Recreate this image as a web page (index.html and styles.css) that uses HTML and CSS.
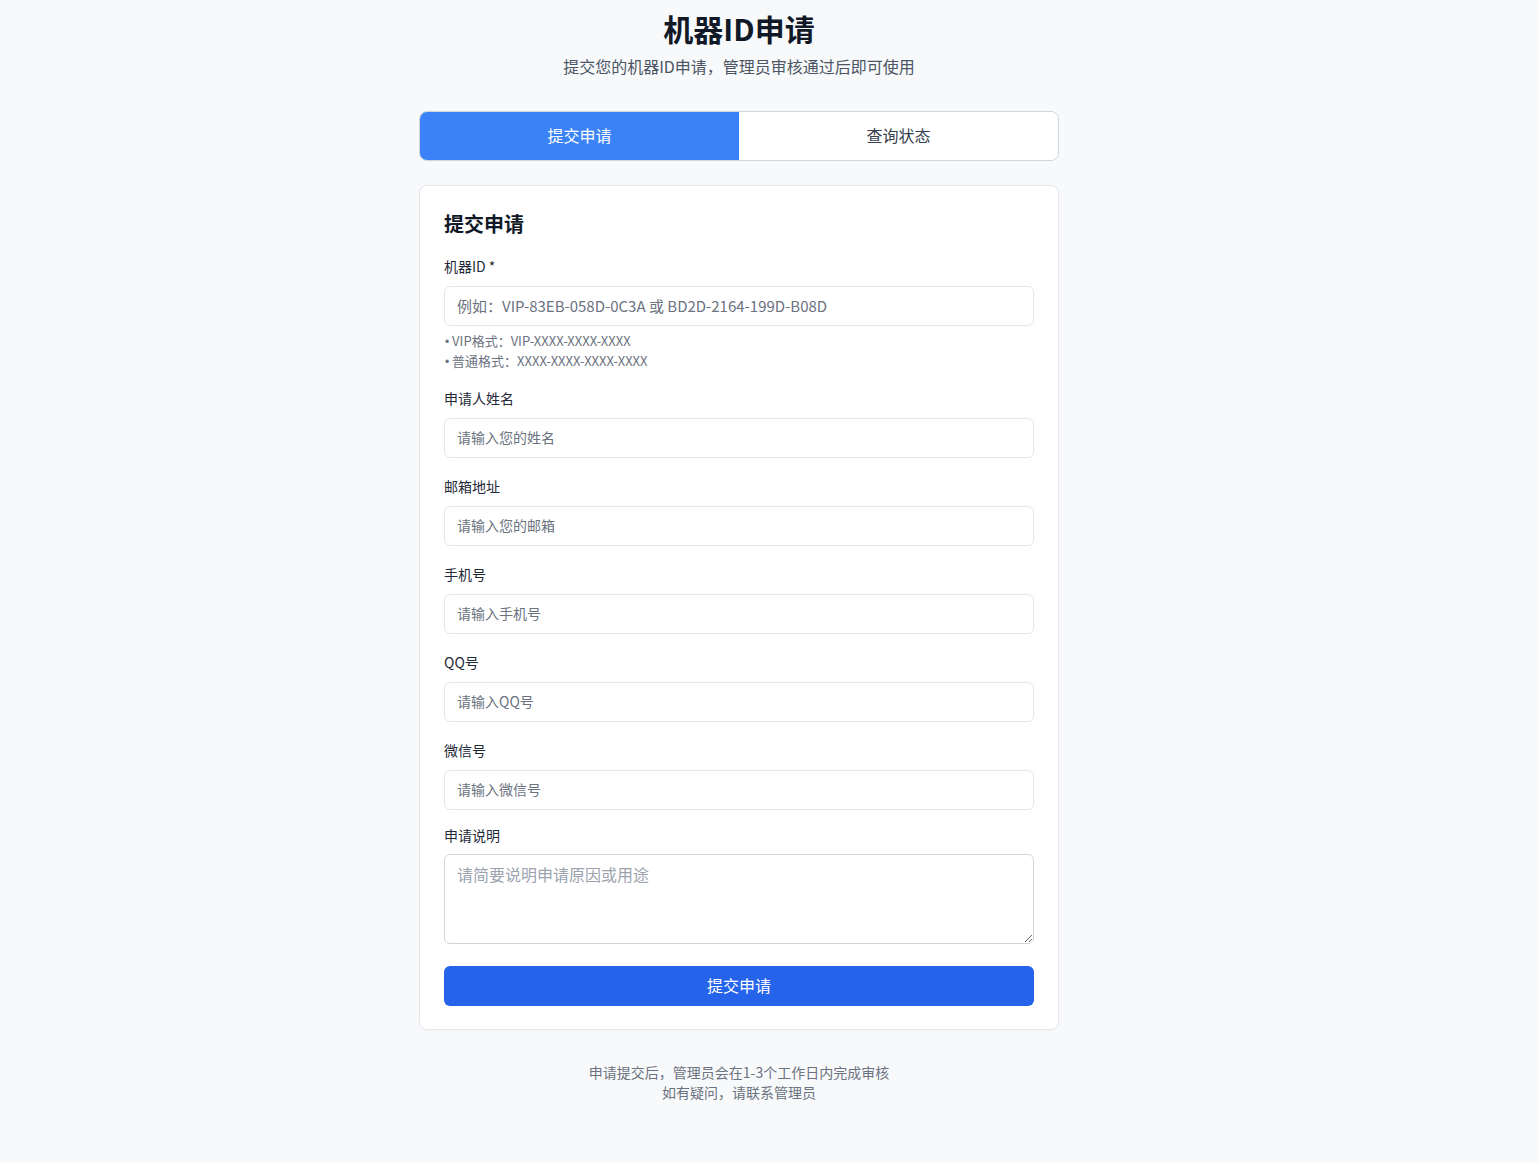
FILE: index.html
```html
<!DOCTYPE html>
<html lang="zh-CN">
<head>
<meta charset="utf-8">
<title>机器ID申请</title>
<link rel="stylesheet" href="styles.css">
</head>
<body>
<div class="shell">
  <main class="page">
    <header class="hero">
      <h1 class="hero-title">机器ID申请</h1>
      <p class="hero-sub">提交您的机器ID申请，管理员审核通过后即可使用</p>
    </header>

    <nav class="tabs">
      <button class="tab tab-active" type="button">提交申请</button>
      <button class="tab" type="button">查询状态</button>
    </nav>

    <section class="card">
      <h2 class="card-title">提交申请</h2>
      <form class="form">
        <div class="field">
          <label class="label">机器ID *</label>
          <input class="input input-id" type="text" placeholder="例如：VIP-83EB-058D-0C3A 或 BD2D-2164-199D-B08D">
          <div class="hints">
            <div class="hint"><span class="dot">•</span> VIP格式：VIP-XXXX-XXXX-XXXX</div>
            <div class="hint"><span class="dot">•</span> 普通格式：XXXX-XXXX-XXXX-XXXX</div>
          </div>
        </div>
        <div class="field">
          <label class="label">申请人姓名</label>
          <input class="input" type="text" placeholder="请输入您的姓名">
        </div>
        <div class="field">
          <label class="label">邮箱地址</label>
          <input class="input" type="text" placeholder="请输入您的邮箱">
        </div>
        <div class="field">
          <label class="label">手机号</label>
          <input class="input" type="text" placeholder="请输入手机号">
        </div>
        <div class="field">
          <label class="label">QQ号</label>
          <input class="input" type="text" placeholder="请输入QQ号">
        </div>
        <div class="field">
          <label class="label">微信号</label>
          <input class="input" type="text" placeholder="请输入微信号">
        </div>
        <div class="field field-area">
          <label class="label label-area">申请说明</label>
          <textarea class="textarea" placeholder="请简要说明申请原因或用途"></textarea>
        </div>
        <button class="submit" type="button">提交申请</button>
      </form>
    </section>

    <footer class="foot">
      <p>申请提交后，管理员会在1-3个工作日内完成审核</p>
      <p>如有疑问，请联系管理员</p>
    </footer>
  </main>
</div>
</body>
</html>
```

FILE: styles.css
```css
* { box-sizing: border-box; }

html, body {
  margin: 0;
  padding: 0;
  background: #f8f9fb;
  font-family: "Noto Sans CJK SC", "Noto Sans", sans-serif;
  color: #1f2937;
}

.shell {
  padding: 10px 61px 60px 0;
}

.page {
  width: 640px;
  margin: 0 auto;
}

.hero {
  text-align: center;
}

.hero-title {
  margin: 0;
  font-size: 30px;
  line-height: 36px;
  font-weight: 700;
  color: #111827;
}

.hero-sub {
  margin: 8px 0 0;
  font-size: 16px;
  line-height: 24px;
  color: #4b5563;
}

.tabs {
  margin-top: 33px;
  display: flex;
  height: 50px;
  border: 1px solid #d1d5db;
  border-radius: 8px;
  overflow: hidden;
  background: #fff;
}

.tab {
  flex: 1;
  border: 0;
  background: #fff;
  font-family: inherit;
  font-size: 16px;
  color: #374151;
  cursor: pointer;
  padding: 0 0 2px;
}

.tab-active {
  background: #3b82f6;
  color: #fff;
}

.card {
  margin-top: 24px;
  background: #fff;
  border: 1px solid #e5e7eb;
  border-radius: 8px;
  padding: 24px 24px 23px;
  box-shadow: 0 1px 2px rgba(0, 0, 0, 0.03);
}

.card-title {
  margin: 0 0 19px;
  font-size: 20px;
  line-height: 27px;
  padding-bottom: 1px;
  font-weight: 700;
  color: #111827;
}

.form {
  display: flex;
  flex-direction: column;
}

.field {
  display: flex;
  flex-direction: column;
  margin-bottom: 19px;
}

.label {
  font-size: 14px;
  line-height: 18px;
  margin-bottom: 11px;
  color: #1f2937;
}

.input {
  height: 40px;
  width: 100%;
  border: 1px solid #e5e7eb;
  border-radius: 6px;
  padding: 0 12px 2px;
  font-family: inherit;
  font-size: 14px;
  color: #111827;
  background: #fff;
  outline: none;
}

.input::placeholder {
  color: #6b7280;
}

.input-id {
  font-size: 15px;
}

.hints {
  margin-top: 5px;
  margin-bottom: -1px;
  font-size: 13px;
  color: #6b7280;
}

.hint {
  height: 20px;
  line-height: 20px;
  overflow: hidden;
  white-space: nowrap;
}

.dot {
  font-family: "Liberation Sans", sans-serif;
  font-size: 12px;
  line-height: 1;
  margin-left: 1px;
}

.field-area {
  margin-bottom: 22px;
}

.label-area {
  margin-top: -3px;
  margin-bottom: 10px;
}

.textarea {
  display: block;
  width: 100%;
  height: 90px;
  border: 1px solid #d1d5db;
  border-radius: 6px;
  padding: 7px 12px 9px;
  font-family: inherit;
  font-size: 16px;
  line-height: 24px;
  resize: vertical;
  outline: none;
}

.textarea::placeholder {
  color: #9ca3af;
}

.submit {
  height: 40px;
  width: 100%;
  border: 0;
  border-radius: 6px;
  background: #2563eb;
  color: #fff;
  font-family: inherit;
  font-size: 16px;
  cursor: pointer;
  padding: 0 0 2px;
}

.foot {
  margin-top: 33px;
  text-align: center;
  font-size: 14px;
  line-height: 20px;
  color: #6b7280;
}

.foot p {
  margin: 0;
}

.foot p:first-child {
  margin-top: -1px;
}
```
